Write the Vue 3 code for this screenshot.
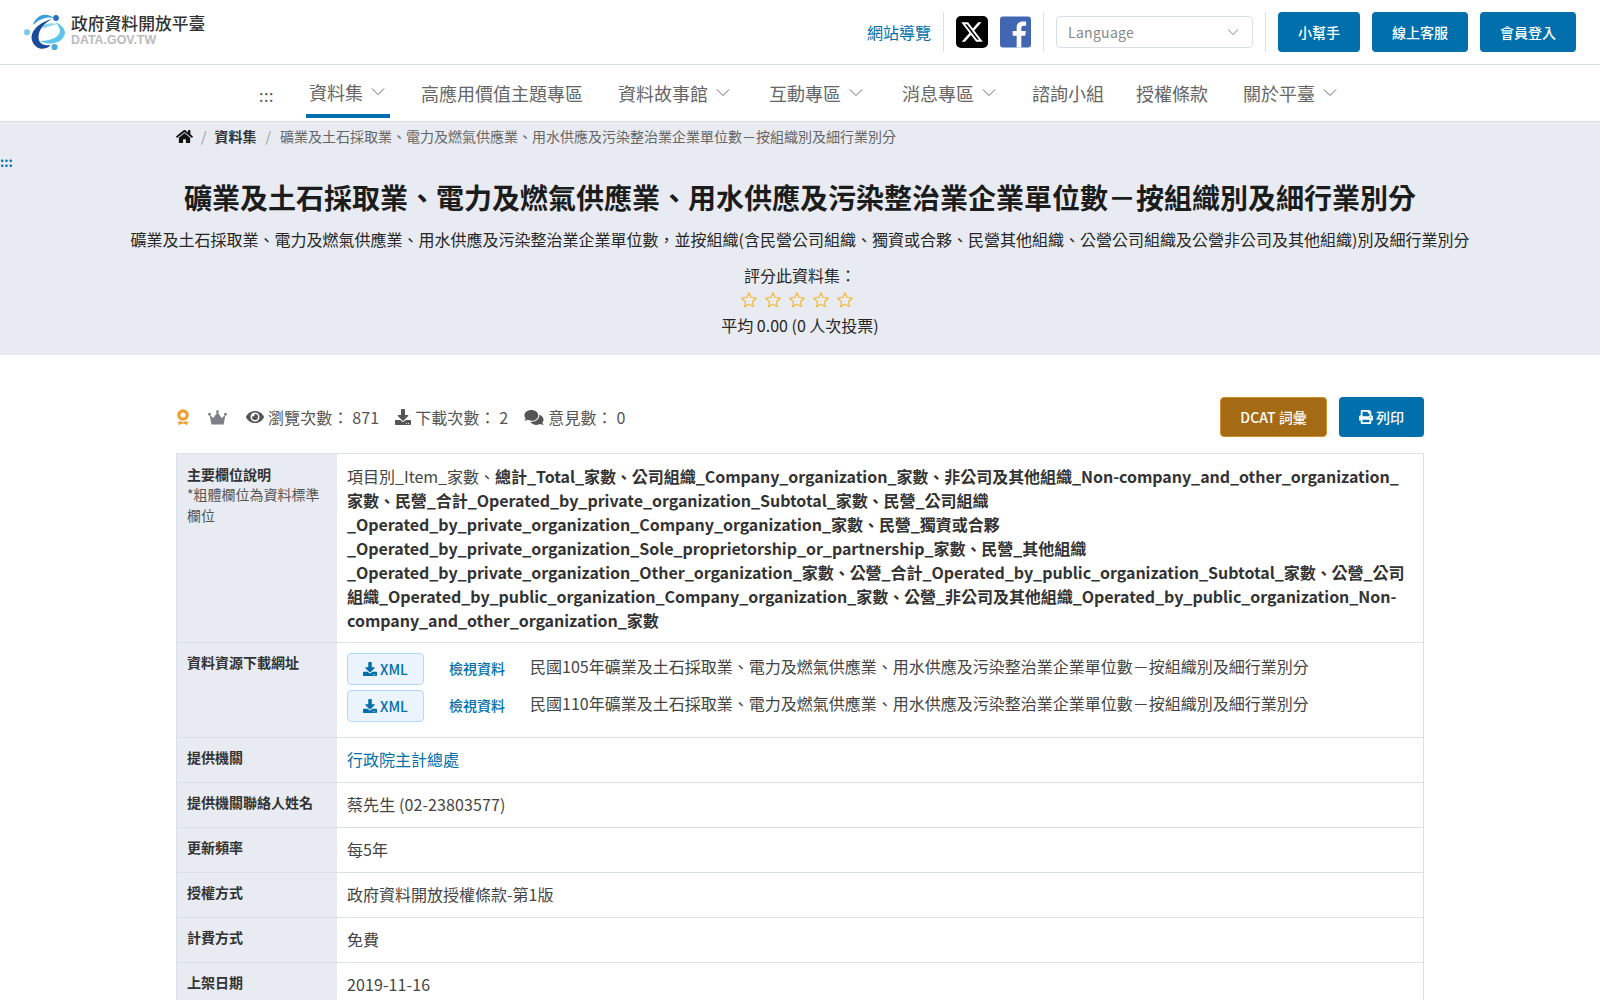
<script setup>
const navItems = [
  { label: '資料集', chevron: true, active: true },
  { label: '高應用價值主題專區' },
  { label: '資料故事館', chevron: true },
  { label: '互動專區', chevron: true },
  { label: '消息專區', chevron: true },
  { label: '諮詢小組' },
  { label: '授權條款' },
  { label: '關於平臺', chevron: true }
]
const stars = [1, 2, 3, 4, 5]
const downloadPath = 'M216 0h80c13.3 0 24 10.7 24 24v168h87.7c17.8 0 26.7 21.5 14.1 34.1L269.7 378.3c-7.5 7.5-19.8 7.5-27.3 0L90.1 226.1c-12.6-12.6-3.7-34.1 14.1-34.1H192V24c0-13.3 10.7-24 24-24zm296 376v112c0 13.3-10.7 24-24 24H24c-13.3 0-24-10.7-24-24V376c0-13.3 10.7-24 24-24h146.7l49 49c20.1 20.1 52.5 20.1 72.6 0l49-49H488c13.3 0 24 10.7 24 24zm-124 88c0-11-9-20-20-20s-20 9-20 20 9 20 20 20 20-9 20-20zm64 0c0-11-9-20-20-20s-20 9-20 20 9 20 20 20 20-9 20-20z'
const title = '礦業及土石採取業、電力及燃氣供應業、用水供應及污染整治業企業單位數－按組織別及細行業別分'
const resources = [
  { year: '民國105年', name: title },
  { year: '民國110年', name: title }
]
const simpleRows = [
  { label: '提供機關', value: '行政院主計總處', link: true },
  { label: '提供機關聯絡人姓名', value: '蔡先生 (02-23803577)', digits: true },
  { label: '更新頻率', value: '每5年' },
  { label: '授權方式', value: '政府資料開放授權條款-第1版' },
  { label: '計費方式', value: '免費' },
  { label: '上架日期', value: '2019-11-16', digits: true }
]
</script>

<template>
  <div class="page">
    <header class="topbar">
      <div class="logo">
        <svg class="logo-mark" viewBox="3 4 44 42" width="44" height="42">
          <path d="M19 33C30 39 43 34 44 25 44 20 39 16 34 14 38 18 39.500 21 39 24 37 30 28 33 19 33z" fill="#5fc4ea" />
          <path d="M22 17C28 15 33 15 36 16 32 17.500 27 18.500 22 20.500z" fill="#8fd6f0" />
          <path d="M12 17C14 8 24 3 33 10 26 8.500 20 10 12 17z" fill="#3a9fdc" />
          <path d="M31 11C22 13 11 20 10.500 29 10.500 35 15 39.500 19 40.500 25 41.500 30 38 29 37 22 38 17.500 35 17.500 29 17.500 22 23 15 31 11z" fill="#1a4a9c" />
          <circle cx="35" cy="10" r="2.900" fill="#2a6fbd" />
          <circle cx="6" cy="24.300" r="3" fill="#7cc8ec" />
          <circle cx="33.500" cy="39" r="3.100" fill="#4aa8e0" />
        </svg>
        <div class="logo-text">
          <div class="logo-name">政府資料開放平臺</div>
          <div class="logo-sub">DATA.GOV.TW</div>
        </div>
      </div>
      <div class="top-right">
        <a class="sitemap">網站導覽</a>
        <span class="vr"></span>
        <svg class="social" viewBox="0 0 32 32" width="32" height="32">
          <rect width="32" height="32" rx="5" fill="#000" />
          <path transform="translate(4 4)" d="M18.244 2.250h3.308l-7.227 8.260 8.502 11.240H16.170l-5.214-6.817L4.990 21.750H1.680l7.730-8.835L1.254 2.250H8.080l4.713 6.231zm-1.161 17.520h1.833L7.084 4.126H5.117z" fill="#fff" />
        </svg>
        <svg class="social fb" viewBox="0 0 32 32" width="31" height="32">
          <rect width="32" height="32" rx="3" fill="#4267b2" />
          <path d="M22 32V19.800h4l.7-4.800H22v-3c0-1.400.5-2.400 2.400-2.400h2.500V5.300c-.5-.1-2-.2-3.600-.2-3.600 0-6.100 2.200-6.100 6.300V15h-4.100v4.800h4.100V32z" fill="#fff" />
        </svg>
        <span class="vr second"></span>
        <div class="lang">
          <span>Language</span>
          <svg viewBox="0 0 12 8" width="12" height="8"><path d="M1 1.500l5 5 5-5" fill="none" stroke="#adb2bd" stroke-width="1.100" /></svg>
        </div>
        <span class="vr third"></span>
        <button class="btn help">小幫手</button>
        <button class="btn">線上客服</button>
        <button class="btn">會員登入</button>
      </div>
    </header>

    <nav class="nav">
      <span class="nav-anchor">:::</span>
      <a v-for="item in navItems" :key="item.label" class="nav-item" :class="{ active: item.active }">
        {{ item.label }}
        <svg v-if="item.chevron" class="chev" viewBox="0 0 16 10" width="14" height="9"><path d="M1 1.500l7 7 7-7" fill="none" stroke="#666" stroke-width="1.100" /></svg>
      </a>
    </nav>

    <section class="banner">
      <div class="crumbs">
        <svg class="home" viewBox="0 0 576 512" width="17" height="15"><path fill="#111" d="M280.370 148.260L96 300.110V464a16 16 0 0 0 16 16l112.060-.29a16 16 0 0 0 15.920-16V368a16 16 0 0 1 16-16h64a16 16 0 0 1 16 16v95.640a16 16 0 0 0 16 16.050L464 480a16 16 0 0 0 16-16V300L295.670 148.260a12.190 12.190 0 0 0-15.300 0zM571.600 251.470L488 182.560V44.050a12 12 0 0 0-12-12h-56a12 12 0 0 0-12 12v72.610L318.470 43a48 48 0 0 0-61 0L4.340 251.470a12 12 0 0 0-1.600 16.900l25.500 31A12 12 0 0 0 45.150 301l235.220-193.740a12.190 12.190 0 0 1 15.300 0L530.900 301a12 12 0 0 0 16.900-1.600l25.500-31a12 12 0 0 0-1.700-16.930z" /></svg>
        <span class="sep">/</span>
        <b>資料集</b>
        <span class="sep">/</span>
        <span class="crumb-last">{{ title }}</span>
      </div>
      <div class="banner-anchor">:::</div>
      <h1>{{ title }}</h1>
      <p class="desc">礦業及土石採取業、電力及燃氣供應業、用水供應及污染整治業企業單位數，並按組織(含民營公司組織、獨資或合夥、民營其他組織、公營公司組織及公營非公司及其他組織)別及細行業別分</p>
      <div class="rate-label">評分此資料集：</div>
      <div class="stars">
        <svg v-for="s in stars" :key="s" viewBox="0 0 24 24" width="18" height="18">
          <path d="M12 2.500l2.900 6.200 6.800.9-5 4.700 1.300 6.700-6-3.300-6 3.300 1.300-6.700-5-4.700 6.800-.9z" fill="none" stroke="#f4b93a" stroke-width="1.600" stroke-linejoin="round" />
        </svg>
      </div>
      <div class="avg">平均 0.00 (0 人次投票)</div>
    </section>

    <main class="content">
      <div class="stats-row">
        <div class="stats">
          <svg class="award" viewBox="0 0 14 17" width="14" height="17">
            <circle cx="7" cy="6" r="4.200" fill="none" stroke="#ef9f2c" stroke-width="3.200" />
            <path d="M1 14l3-2 3 1.500 3-1.500 3 2-2 .5.5 2-2.500-1.500-2-.5-2 .5-2.500 1.500.5-2z" fill="#ef9f2c" />
          </svg>
          <svg class="crown" viewBox="0 0 20 16" width="19" height="15">
            <path d="M1.500 5l4 3.500L10 2l4.500 6.500 4-3.500-2 10.500h-13z" fill="#7d8089" />
            <circle cx="1.500" cy="4.500" r="1.500" fill="#7d8089" />
            <circle cx="10" cy="1.800" r="1.500" fill="#7d8089" />
            <circle cx="18.500" cy="4.500" r="1.500" fill="#7d8089" />
          </svg>
          <span class="stat">
            <svg viewBox="0 0 576 512" width="18" height="16"><path fill="#555" d="M572.520 241.400C518.290 135.590 410.930 64 288 64S57.680 135.640 3.480 241.410a32.350 32.350 0 0 0 0 29.190C57.710 376.410 165.070 448 288 448s230.320-71.640 284.520-177.410a32.350 32.350 0 0 0 0-29.190zM288 400a144 144 0 1 1 144-144 143.930 143.930 0 0 1-144 144zm0-240a95.310 95.310 0 0 0-25.310 3.790 47.850 47.850 0 0 1-66.900 66.900A95.780 95.780 0 1 0 288 160z" /></svg>
            瀏覽次數： 871
          </span>
          <span class="stat">
            <svg viewBox="0 0 512 512" width="16" height="16"><path fill="#555" :d="downloadPath" /></svg>
            下載次數： 2
          </span>
          <span class="stat">
            <svg viewBox="0 0 576 512" width="20" height="17"><path fill="#555" d="M416 192c0-88.400-93.100-160-208-160S0 103.600 0 192c0 34.300 14.100 65.900 38 92-13.400 30.200-35.500 54.200-35.800 54.500-2.200 2.300-2.800 5.700-1.500 8.700S4.800 352 8 352c36.600 0 66.900-12.300 88.700-25 32.200 15.700 70.300 25 111.300 25 114.900 0 208-71.600 208-160zm122 220c23.900-26 38-57.700 38-92 0-66.900-53.500-124.200-129.300-148.100.9 6.600 1.300 13.300 1.300 20.100 0 105.900-107.700 192-240 192-10.800 0-21.300-.8-31.700-1.900C207.800 439.600 281.800 480 368 480c41 0 79.100-9.200 111.300-25 21.800 12.700 52.100 25 88.700 25 3.200 0 6.100-1.900 7.300-4.800 1.300-2.900.7-6.300-1.500-8.700-.3-.3-22.400-24.200-35.800-54.500z" /></svg>
            意見數： 0
          </span>
        </div>
        <div class="actions">
          <button class="btn dcat">DCAT 詞彙</button>
          <button class="btn print">
            <svg viewBox="0 0 512 512" width="14" height="14"><path fill="#fff" d="M448 192V77.250c0-8.490-3.370-16.620-9.370-22.630L393.370 9.370c-6-6-14.140-9.370-22.630-9.370H96C78.330 0 64 14.330 64 32v160c-35.350 0-64 28.650-64 64v112c0 8.840 7.160 16 16 16h48v96c0 17.670 14.330 32 32 32h320c17.670 0 32-14.330 32-32v-96h48c8.840 0 16-7.160 16-16V256c0-35.350-28.650-64-64-64zm-64 256H128v-96h256v96zm0-224H128V64h192v48c0 8.840 7.160 16 16 16h48v96zm48 72c-13.250 0-24-10.750-24-24 0-13.260 10.750-24 24-24s24 10.740 24 24c0 13.250-10.750 24-24 24z" /></svg>
            列印
          </button>
        </div>
      </div>

      <div class="table">
        <div class="row">
          <div class="th"><b>主要欄位說明</b><div class="hint">*粗體欄位為資料標準欄位</div></div>
          <div class="td fields">項目別_Item_家數、<b>總計_Total_家數、公司組織_Company_organization_家數、非公司及其他組織_Non-company_and_other_organization_家數、民營_合計_Operated_by_private_organization_Subtotal_家數、民營_公司組織_Operated_by_private_organization_Company_organization_家數、民營_獨資或合夥_Operated_by_private_organization_Sole_proprietorship_or_partnership_家數、民營_其他組織_Operated_by_private_organization_Other_organization_家數、公營_合計_Operated_by_public_organization_Subtotal_家數、公營_公司組織_Operated_by_public_organization_Company_organization_家數、公營_非公司及其他組織_Operated_by_public_organization_Non-company_and_other_organization_家數</b></div>
        </div>
        <div class="row res-row-wrap">
          <div class="th"><b>資料資源下載網址</b></div>
          <div class="td res">
            <div v-for="r in resources" :key="r.year" class="res-row">
              <button class="xml">
                <svg viewBox="0 0 512 512" width="14" height="14"><path fill="#006fab" :d="downloadPath" /></svg>
                XML
              </button>
              <a class="view">檢視資料</a>
              <span class="res-name">{{ r.year }}{{ r.name }}</span>
            </div>
          </div>
        </div>
        <div v-for="row in simpleRows" :key="row.label" class="row simple">
          <div class="th"><b>{{ row.label }}</b></div>
          <div class="td" :class="{ link: row.link, digits: row.digits }">{{ row.value }}</div>
        </div>
      </div>
    </main>
  </div>
</template>

<style>
html, body { margin: 0; background: #fff; }
</style>

<style scoped>
.page { font-family: "Noto Sans CJK TC", "Noto Sans", sans-serif; color: #333; font-size: 16px; line-height: 24px; background: #fff; height: 1000px; overflow: hidden; }
.topbar { height: 64px; border-bottom: 1px solid #dbdfe9; display: flex; justify-content: space-between; align-items: center; padding: 0 24px; box-sizing: content-box; }
.logo { display: flex; align-items: center; gap: 3px; }
.logo-mark { display: block; margin-top: 2px; }
.logo-text { margin-top: -5px; }
.logo-name { font-size: 16.800px; line-height: 20px; color: #333; font-weight: 500; }
.logo-sub { font-family: "Liberation Sans", sans-serif; font-weight: 700; font-size: 12.400px; line-height: 14px; color: #bbb; }
.top-right { display: flex; align-items: center; }
.sitemap { color: #006fab; font-size: 16px; margin-right: 12px; }
.vr { width: 1px; height: 40px; background: #dbdfe9; }
.social { display: block; margin-left: 12px; }
.social.fb { margin-right: 12px; }
.vr.second { margin-right: 12px; }
.lang { width: 197px; height: 32px; box-sizing: border-box; border: 1px solid #dbdfe9; border-radius: 4px; padding: 0 13px 0 11px; display: flex; align-items: center; justify-content: space-between; color: #888; font-size: 14px; letter-spacing: 0.300px; }
.vr.third { margin: 0 12px; }
.btn { height: 40px; width: 96px; border: 0; border-radius: 4px; background: #006fab; color: #fff; font: inherit; font-size: 14px; font-weight: 500; padding: 0; margin-left: 12px; display: flex; align-items: center; justify-content: center; gap: 3px; }
.btn.help { width: 82px; margin-left: 0; }
.nav { height: 56px; border-bottom: 1px solid #dbdfe9; display: flex; align-items: stretch; padding-left: 259px; box-sizing: content-box; }
.nav-anchor { color: #555; font-size: 16px; line-height: 60px; width: 47px; letter-spacing: 0.500px; }
.nav-item { display: flex; align-items: center; height: 53px; box-sizing: border-box; padding: 2px 4px 0 3px; margin-right: 29px; font-size: 18px; color: #666; gap: 8px; }
.nav-item:nth-child(2) { margin-right: 28px; }
.nav-item:nth-child(3) { margin-right: 28px; }
.nav-item:nth-child(4) { margin-right: 31px; }
.nav-item:nth-child(5) { margin-right: 31px; }
.nav-item:nth-child(6) { margin-right: 28px; }
.nav-item:nth-child(7) { margin-right: 25px; }
.nav-item:nth-child(8) { margin-right: 28px; }
.nav-item.active { border-bottom: 4px solid #006fab; padding-top: 4px; }
.chev { display: block; margin-right: 1px; }
.banner { height: 233px; background: #e8ebf1; position: relative; text-align: center; color: #262626; }
.crumbs { height: 28px; padding-left: 176px; display: flex; align-items: center; font-size: 14px; color: #666; text-align: left; }
.crumbs b { color: #333; font-weight: 600; }
.home { display: block; margin-right: 7px; }
.sep { color: #999; margin: 0 8px 0 1px; }
.crumbs b + .sep { margin: 0 9px 0 9px; }
.banner-anchor { position: absolute; left: 0; top: 32px; color: #006fab; font-size: 13px; font-weight: 700; line-height: 16px; }
h1 { margin: 30px 0 0; font-size: 28px; line-height: 34px; font-weight: 700; color: #1c1c1c; }
.desc { margin: 13px 0 0; font-size: 16px; line-height: 24px; }
.rate-label { margin-top: 12px; }
.stars { display: flex; justify-content: center; gap: 6px; height: 24px; align-items: center; padding: 1px 6px 0 0; box-sizing: content-box; }
.stars svg { display: block; }
.avg { line-height: 26px; }
.content { width: 1248px; margin: 0 auto; }
.stats-row { display: flex; justify-content: space-between; align-items: center; margin-top: 42px; height: 40px; }
.stats { display: flex; align-items: center; color: #555; }
.stat { display: flex; align-items: center; gap: 4px; margin-right: 16px; letter-spacing: 0.100px; }
.stat svg { display: block; }
.award { display: block; margin-right: 18px; }
.crown { display: block; margin-right: 19px; }
.actions { display: flex; }
.btn.dcat { width: 107px; background: #a46a14; border: 1px solid #d18f27; box-sizing: border-box; margin-left: 0; }
.btn.print { width: 85px; }
.table { margin-top: 16px; border: 1px solid #dbdfe9; border-bottom: 0; width: 1248px; box-sizing: border-box; }
.row { display: flex; border-bottom: 1px solid #dbdfe9; }
.th { width: 160px; flex: none; box-sizing: border-box; background: #e8ebf1; padding: 10px; font-size: 14px; line-height: 21px; color: #333; }
.th b { font-weight: 600; }
.hint { color: #555; margin-top: -1px; }
.td { flex: 1; padding: 10px; min-width: 0; line-height: 24px; color: #444; }
.td b { font-weight: 600; color: #333; letter-spacing: -0.040px; }
.digits { letter-spacing: 0.100px; }
.fields { overflow-wrap: anywhere; }
.res-row-wrap .th { padding-top: 9px; }
.simple .th { padding-top: 9px; }
.simple .td { padding: 9px 10px 11px; }
.res-row { display: flex; margin-bottom: 5px; }
.xml { width: 77px; height: 32px; flex: none; box-sizing: border-box; border: 1px solid #b3d9fa; border-radius: 4px; background: #ebf3fd; color: #006fab; font: inherit; font-size: 14px; font-weight: 500; padding: 0; display: flex; align-items: center; justify-content: center; gap: 3px; }
.view { color: #006fab; font-size: 14px; margin: 3px 25px 0 25px; font-weight: 500; }
.res-name { color: #444; margin-top: 1px; }
.link { color: #006fab; }
</style>
